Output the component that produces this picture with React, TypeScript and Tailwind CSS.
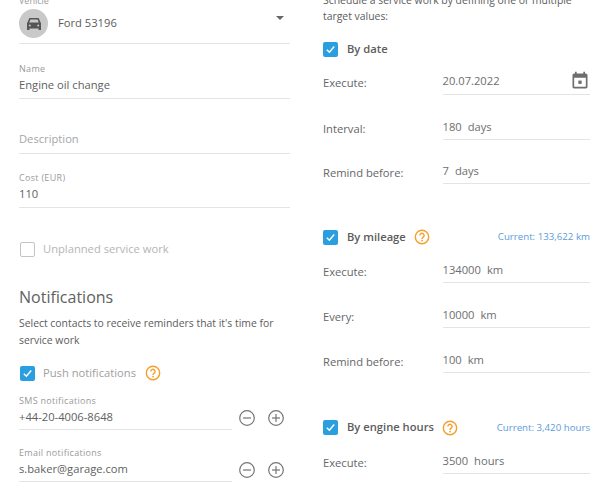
// Reference crops the top of the form, so the column starts above the fold
function Check({ on = true }: { on?: boolean }) {
  if (!on) {
    return <span className="block w-[15px] h-[15px] rounded-[2px] border border-[#c4c4c4] bg-white shrink-0" />
  }
  return (
    <span className="flex items-center justify-center w-[15px] h-[15px] rounded-[2px] bg-[#2a9fe0] shrink-0">
      <svg width="11" height="11" viewBox="0 0 11 11" fill="none">
        <path d="M1.8 5.8 L4.4 8.2 L9.2 2.6" stroke="#fff" strokeWidth="1.5" />
      </svg>
    </span>
  )
}

function Help() {
  return (
    <svg width="16" height="16" viewBox="0 0 16 16" fill="none" className="shrink-0">
      <circle cx="8" cy="8" r="6.7" stroke="#f5a02c" strokeWidth="1.4" />
      <path d="M5.9 6.4a2.1 2.1 0 1 1 3.3 1.7c-.8.5-1.2.9-1.2 1.8" stroke="#f5a02c" strokeWidth="1.4" />
      <circle cx="8" cy="11.6" r=".9" fill="#f5a02c" />
    </svg>
  )
}

function RoundBtn({ plus }: { plus?: boolean }) {
  return (
    <svg width="16" height="16" viewBox="0 0 16 16" fill="none">
      <circle cx="8" cy="8" r="7.3" stroke="#757575" strokeWidth="1.2" />
      <path d="M4 8h8" stroke="#757575" strokeWidth="1.2" />
      {plus && <path d="M8 4v8" stroke="#757575" strokeWidth="1.2" />}
    </svg>
  )
}

function Field({ label, value, className }: { label: string; value: string; className: string }) {
  return (
    <div className={`border-b border-[#e4e4e4] flex flex-col justify-end ${className}`}>
      <div className="text-[9px] leading-[12px] text-[#9a9a9a] tracking-[0.3px]">{label}</div>
      <div className="text-[11.2px] leading-[18px] mt-[1px] text-[#616161]">{value}</div>
    </div>
  )
}

function ContactRow({ label, value, className }: { label: string; value: string; className: string }) {
  return (
    <div className={`flex items-end ${className}`}>
      <Field label={label} value={value} className="w-[213px] h-full pb-[3px]" />
      <div className="flex gap-[13px] ml-[7px] mb-[4px]">
        <RoundBtn />
        <RoundBtn plus />
      </div>
    </div>
  )
}

function Row({ label, value, unit, icon }: { label: string; value: string; unit?: string; icon?: boolean }) {
  return (
    <div className="flex items-end h-[44.8px] text-[11.2px] text-[#666]">
      <div className={`w-[119.5px] leading-[18px] ${icon ? 'pb-[3px]' : 'pb-[2px]'}`}>{label}</div>
      <div className="flex-1 h-[30px] border-b border-[#e4e4e4] flex items-end justify-between pb-[3px] text-[#6e6e6e]">
        <span className={`leading-[18px] ${icon ? 'pb-[1px]' : ''}`}>
          {value}
          {unit && <span className="ml-[6px]">{unit}</span>}
        </span>
        {icon && (
          <svg width="20" height="20" viewBox="0 0 24 24" fill="#6e6e6e" className="shrink-0">
            <path d="M16 1v2H8V1H6v2H5c-1.11 0-1.99.9-1.99 2L3 19c0 1.1.89 2 2 2h14c1.1 0 2-.9 2-2V5c0-1.1-.9-2-2-2h-1V1h-2zm3 18H5V8h14v11z" />
            <path d="M10 11.5h4v4h-4z" />
          </svg>
        )}
      </div>
    </div>
  )
}

function GroupHead({ label, current, help, className }: { label: string; current?: string; help?: boolean; className: string }) {
  return (
    <div className={`flex items-center ${className}`}>
      <Check />
      <span className="ml-[9px] text-[11.2px] font-semibold text-[#5c5c5c]">{label}</span>
      {help && <span className="ml-[8px]"><Help /></span>}
      {current && <span className="ml-auto text-[9.7px] text-[#5b9bdc]">{current}</span>}
    </div>
  )
}

export default function App() {
  return (
    <div className="w-[600px] h-[500px] overflow-hidden bg-white font-['Open_Sans',sans-serif]">
      <div className="flex -mt-[7px]">
        {/* left column */}
        <div className="w-[271px] ml-[19px] shrink-0">
          <div className="text-[9px] leading-[12px] h-[16px] pt-[2px] text-[#9a9a9a]">Vehicle</div>
          <div className="flex items-center h-[29px] border-b border-[#e4e4e4] pb-[5px] box-content">
            <div className="w-[29px] h-[29px] rounded-full bg-[#c9c9c9] flex items-center justify-center">
              <svg width="16" height="14" viewBox="0 0 16 14">
                <path d="M3.4 1h9.2L15 6.2V13h-2.4v-1.4H3.4V13H1V6.2z" fill="#555" />
                <path d="M4.4 2.4h7.2l1.2 3.2H3.2z" fill="#c9c9c9" />
                <circle cx="3.8" cy="8.4" r="1" fill="#c9c9c9" />
                <circle cx="12.2" cy="8.4" r="1" fill="#c9c9c9" />
              </svg>
            </div>
            <span className="ml-[10px] text-[11.2px] text-[#5c5c5c]">Ford 53196</span>
            <span className="ml-auto mr-[6px] mb-[12px] w-0 h-0 border-x-[4px] border-x-transparent border-t-[4px] border-t-[#666]" />
          </div>
          <Field label="Name" value="Engine oil change" className="h-[55px] pb-[4px]" />
          <div className="h-[55px] border-b border-[#e4e4e4] flex items-end pb-[5px] text-[11.2px] leading-[18px] text-[#a6a6a6]">Description</div>
          <Field label="Cost (EUR)" value="110" className="h-[54px] pb-[4px]" />
          <div className="flex items-center mt-[33px] h-[16px] ml-[1px]">
            <Check on={false} />
            <span className="ml-[8px] text-[11.2px] text-[#b5b5b5]">Unplanned service work</span>
          </div>
          <div className="mt-[28px] text-[16px] leading-[24px] font-medium text-[#616161]">Notifications</div>
          <p className="mt-[6px] text-[10.4px] leading-[17px] text-[#5c5c5c]">
            Select contacts to receive reminders that it's time for service work
          </p>
          <div className="flex items-center mt-[16px] h-[16px] ml-[1px]">
            <Check />
            <span className="ml-[8px] text-[11.2px] text-[#a0a0a0]">Push notifications</span>
            <span className="ml-[9px]"><Help /></span>
          </div>
          <ContactRow label="SMS notifications" value="+44-20-4006-8648" className="h-[49px]" />
          <ContactRow label="Email notifications" value="s.baker@garage.com" className="h-[52px]" />
        </div>

        {/* right column */}
        <div className="w-[267px] ml-[33px] -mt-[1px] shrink-0">
          <p className="text-[10.4px] leading-[16px] text-[#5c5c5c]">
            Schedule a service work by defining one or multiple target values:
          </p>
          <GroupHead label="By date" className="h-[16px] mt-[17px]" />
          <div className="-mt-[7px]">
            <Row label="Execute:" value="20.07.2022" icon />
            <Row label="Interval:" value="180" unit="days" />
            <Row label="Remind before:" value="7" unit="days" />
          </div>
          <GroupHead label="By mileage" current="Current: 133,622 km" help className="h-[16px] mt-[45px]" />
          <div className="-mt-[7px]">
            <Row label="Execute:" value="134000" unit="km" />
            <Row label="Every:" value="10000" unit="km" />
            <Row label="Remind before:" value="100" unit="km" />
          </div>
          <GroupHead label="By engine hours" current="Current: 3,420 hours" help className="h-[16px] mt-[47px]" />
          <div className="-mt-[7px]">
            <Row label="Execute:" value="3500" unit="hours" />
          </div>
        </div>
      </div>
    </div>
  )
}
